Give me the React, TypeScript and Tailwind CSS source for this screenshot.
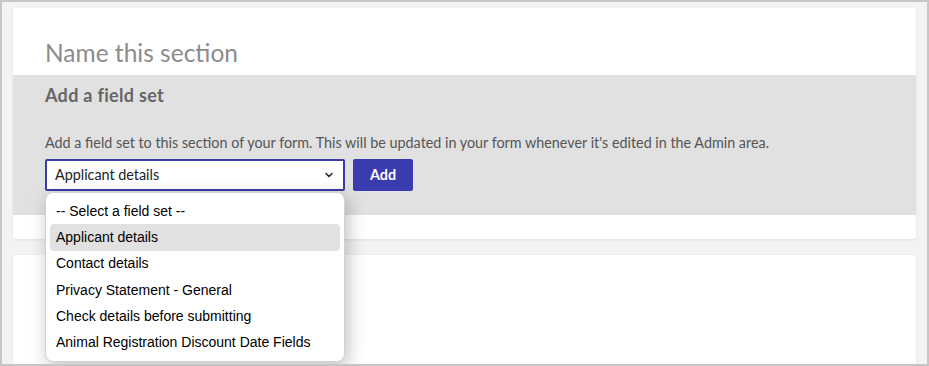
import { ChevronDown } from 'lucide-react'

const OPTIONS = [
  '-- Select a field set --',
  'Applicant details',
  'Contact details',
  'Privacy Statement - General',
  'Check details before submitting',
  'Animal Registration Discount Date Fields',
]

export default function App() {
  const selected = 'Applicant details'

  return (
    <div className="flex h-[366px] w-[929px] flex-col gap-4 overflow-hidden border-2 border-[#c6c6c6] bg-[#f3f3f3] px-[11px] pt-[6px] font-['Lato',sans-serif]">
      {/* section card */}
      <div className="shrink-0 rounded-[3px] bg-white pt-[30px] pb-6 shadow-[0_1px_3px_rgba(0,0,0,0.08)]">
        <h2 className="mb-[7px] px-8 text-[24.5px] leading-[30px] text-[#8c8c8c]">Name this section</h2>

        <div className="bg-[#e1e1e1] px-8 pt-[9px] pb-6">
          <h3 className="text-[18px] font-bold leading-[22px] tracking-[0.3px] text-[#666]">Add a field set</h3>
          <p className="mt-[27px] text-[14.35px] leading-5 text-[#555]">
            Add a field set to this section of your form. This will be updated in your form whenever it's edited in the Admin area.
          </p>
          <div className="mt-[6px] flex gap-2">
            <div className="relative">
              <div className="flex h-8 w-[300px] items-center justify-between rounded-[2px] border-2 border-[#3b3ba8] bg-white pl-2 pr-[8px] text-[14.35px] text-[#222]">
                <span>{selected}</span>
                <ChevronDown className="h-3 w-3 text-[#222]" strokeWidth={3} />
              </div>
              <ul className="absolute left-0 top-[33px] z-10 w-[300px] rounded-lg border border-[#d2d2d2] bg-white p-[4px] py-[5px] font-['Liberation_Sans',Arial,sans-serif] text-[14px] text-black shadow-[3px_5px_18px_rgba(0,0,0,0.25)]">
                {OPTIONS.map((o) => (
                  <li
                    key={o}
                    className={[
                      'flex h-[26.3px] items-center rounded px-[6px]',
                      o === selected ? 'bg-[#e1e1e1]' : '',
                    ].join(' ')}
                  >
                    {o}
                  </li>
                ))}
              </ul>
            </div>
            <button className="h-8 rounded-[2px] bg-[#3b3bb0] px-[17px] text-[14.35px] font-bold text-white">Add</button>
          </div>
        </div>
      </div>

      {/* next section card */}
      <div className="flex-1 rounded-t-[3px] bg-white shadow-[0_1px_3px_rgba(0,0,0,0.08)]" />
    </div>
  )
}
